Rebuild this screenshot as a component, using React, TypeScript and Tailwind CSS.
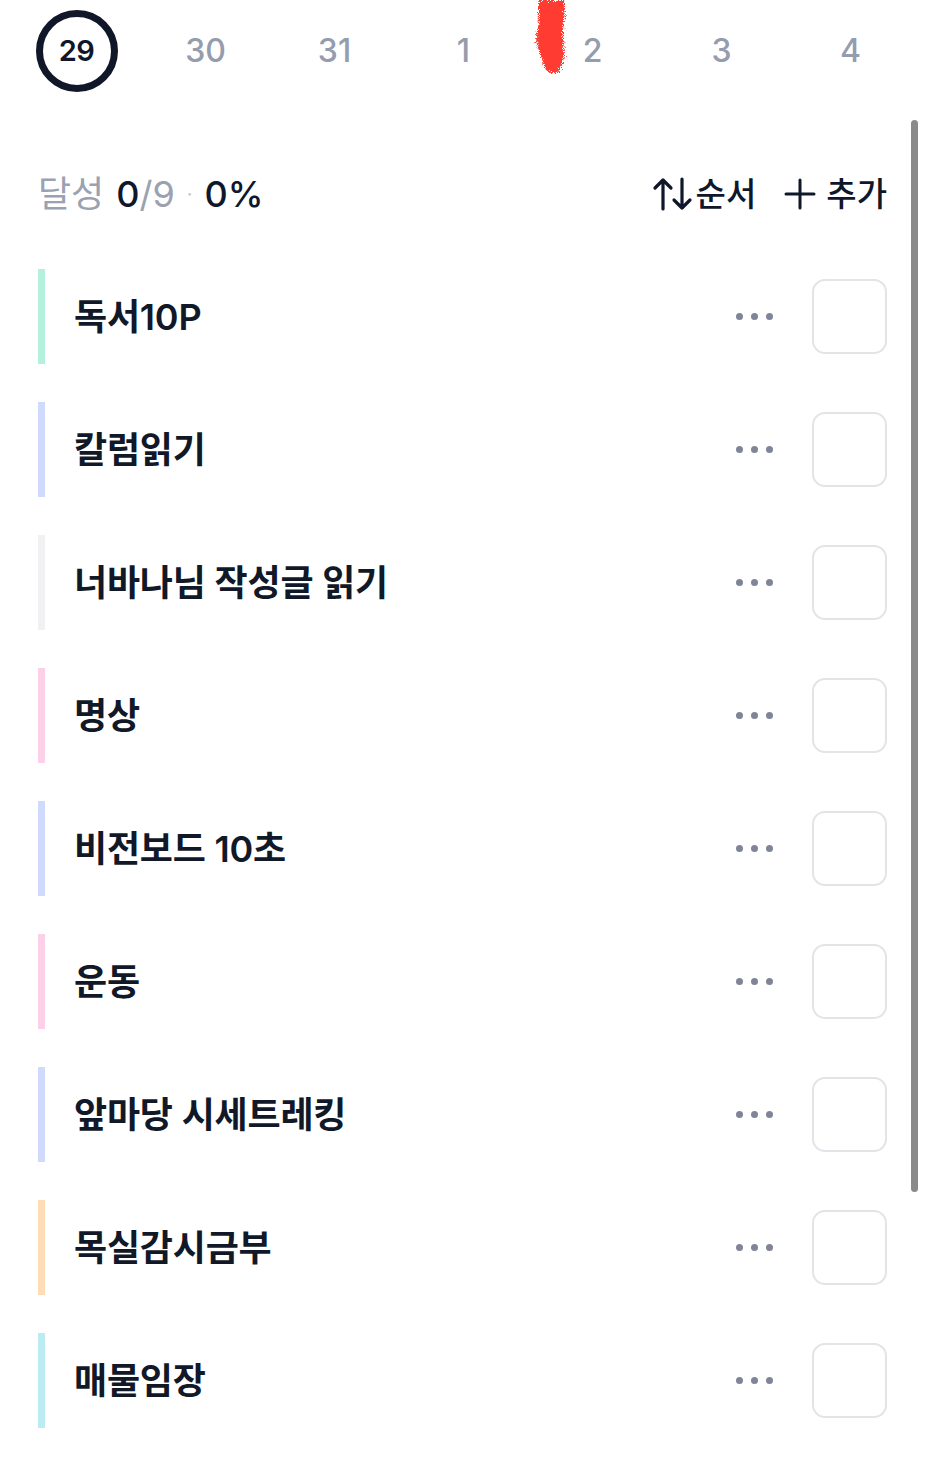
import React from 'react';

const dates = ['29', '30', '31', '1', '2', '3', '4'];

const habits = [
  { title: '독서10P', color: 'bg-[#b4f1dc]' },
  { title: '칼럼읽기', color: 'bg-[#cfdafc]' },
  { title: '너바나님 작성글 읽기', color: 'bg-[#f1f1f3]' },
  { title: '명상', color: 'bg-[#fdd0ea]' },
  { title: '비전보드 10초', color: 'bg-[#cfdafc]' },
  { title: '운동', color: 'bg-[#fdd0ea]' },
  { title: '앞마당 시세트레킹', color: 'bg-[#cfdafc]' },
  { title: '목실감시금부', color: 'bg-[#fedcb6]' },
  { title: '매물임장', color: 'bg-[#bcecf3]' },
];

function SortIcon() {
  return (
    <svg width="42" height="36" viewBox="0 0 42 36" fill="none" stroke="#0f172a" strokeWidth="3.2" strokeLinecap="round" strokeLinejoin="round">
      <path d="M11 33V4M3 12l8-8 8 8" />
      <path d="M30 3v29M22 24l8 8 8-8" />
    </svg>
  );
}

function PlusIcon() {
  return (
    <svg width="32" height="32" viewBox="0 0 32 32" fill="none" stroke="#0f172a" strokeWidth="3" strokeLinecap="round">
      <path d="M16 2v28M2 16h28" />
    </svg>
  );
}

function Scribble() {
  return (
    <svg className="absolute left-[522px] top-0 pointer-events-none" width="54" height="80" viewBox="0 0 54 80">
      <defs>
        <filter id="rough" x="-30%" y="-30%" width="160%" height="160%">
          <feTurbulence type="fractalNoise" baseFrequency="1.2" numOctaves="3" seed="5" />
          <feDisplacementMap in="SourceGraphic" scale="9" />
          <feGaussianBlur stdDeviation="0.7" />
        </filter>
      </defs>
      <path
        d="M18 0 L42 0 C44 12 42 20 41 30 C41 42 43 52 41 62 C39 70 35 74 29 73 C23 72 21 64 19 55 C15 46 12 38 16 28 C18 18 15 8 18 0 Z"
        fill="#ff3a30"
        filter="url(#rough)"
      />
    </svg>
  );
}

export default function App() {
  return (
    <div
      className="relative w-[926px] h-[1474px] bg-white overflow-hidden"
      style={{ fontFamily: 'Inter, "Noto Sans CJK KR", sans-serif' }}
    >
      {/* week strip */}
      <div className="flex pl-[12px] pt-[10px]">
        {dates.map((d, i) => (
          <div key={d} className="w-[129px] h-[82px] flex items-center justify-center">
            {i === 0 ? (
              <div className="w-[82px] h-[82px] rounded-full border-[7px] border-[#0f1729] flex items-center justify-center text-[29px] font-semibold text-[#0f1729] tracking-[-0.5px]">
                {d}
              </div>
            ) : (
              <span className="text-[32px] font-medium text-[#949cad]">{d}</span>
            )}
          </div>
        ))}
      </div>
      <Scribble />

      {/* summary + actions */}
      <div className="flex items-center justify-between pl-[38px] pr-[39px] mt-[80px] h-[44px]">
        <div className="flex items-center text-[36px] leading-none">
          <span className="text-[#9aa1b0] font-normal">달성</span>
          <span className="ml-[12px] text-[#0f172a] font-medium">0</span>
          <span className="text-[#9aa1b0] font-normal">/9</span>
          <span className="mx-[12px] text-[#c4c8d0] text-[20px]">·</span>
          <span className="text-[#0f172a] font-medium">0%</span>
        </div>
        <div className="flex items-center text-[33px] font-medium text-[#0f172a] leading-none">
          <SortIcon />
          <span className="ml-[2px]">순서</span>
          <span className="ml-[28px]"><PlusIcon /></span>
          <span className="ml-[10px]">추가</span>
        </div>
      </div>

      {/* habit list */}
      <div className="flex flex-col mt-[34px] pl-[38px] pr-[39px]">
        {habits.map((h) => (
          <div key={h.title} className="flex items-center h-[133px]">
            <div className={`w-[7px] h-[95px] ${h.color}`} />
            <div className="flex-1 ml-[29px] text-[36px] font-semibold text-[#111827] tracking-[-0.2px]">
              {h.title}
            </div>
            <div className="flex items-center gap-[8px] mr-[39px]">
              <span className="w-[7px] h-[7px] rounded-full bg-[#7f8497]" />
              <span className="w-[7px] h-[7px] rounded-full bg-[#7f8497]" />
              <span className="w-[7px] h-[7px] rounded-full bg-[#7f8497]" />
            </div>
            <div className="w-[75px] h-[75px] rounded-[13px] border-2 border-[#e3e4e8] bg-white" />
          </div>
        ))}
      </div>

      {/* scroll indicator */}
      <div className="absolute left-[911px] top-[120px] w-[7px] h-[1072px] rounded-full bg-[#8a8a8a]" />
    </div>
  );
}
